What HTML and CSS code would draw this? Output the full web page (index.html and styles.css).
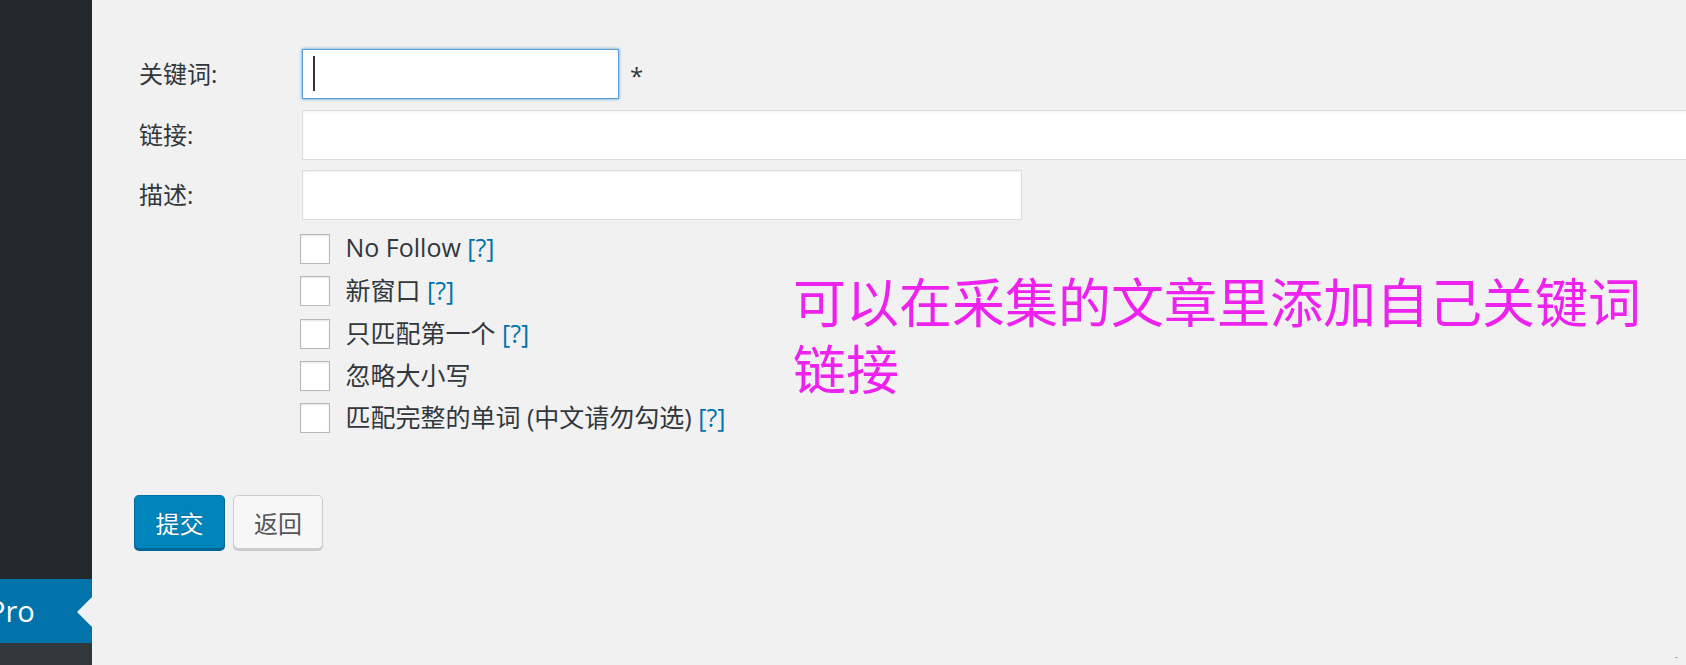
FILE: index.html
```html
<!DOCTYPE html>
<html lang="zh-CN">

<head>
    <meta charset="UTF-8">
    <meta name="viewport" content="width=device-width, initial-scale=1.0">
    <title>关键词链接</title>
    <link rel="stylesheet" href="styles.css">
</head>

<body>

    <!-- Admin menu -->
    <div class="sidebar">
        <div class="menu-top"></div>
        <div class="menu-item current">
            <span class="menu-name">Pro</span>
        </div>
        <div class="menu-sub"></div>
    </div>

    <div class="main">
        <form class="keyword-form">
            <div class="fields">
                <div class="form-row">
                    <label class="form-label" for="keyword">关键词:</label>
                    <div class="field">
                        <input type="text" id="keyword" class="text-input focused">
                        <span class="caret"></span>
                    </div>
                    <span class="required">*</span>
                </div>

                <div class="form-row">
                    <label class="form-label" for="link">链接:</label>
                    <input type="text" id="link" class="text-input wide">
                </div>

                <div class="form-row">
                    <label class="form-label" for="desc">描述:</label>
                    <input type="text" id="desc" class="text-input medium">
                </div>
            </div>

            <!-- Options -->
            <div class="options">
                <label class="option"><input type="checkbox"><span class="option-text"> No Follow <a href="#">[?]</a></span></label>
                <label class="option"><input type="checkbox"><span class="option-text"> 新窗口 <a href="#">[?]</a></span></label>
                <label class="option"><input type="checkbox"><span class="option-text"> 只匹配第一个 <a href="#">[?]</a></span></label>
                <label class="option"><input type="checkbox"><span class="option-text"> 忽略大小写</span></label>
                <label class="option"><input type="checkbox"><span class="option-text"> 匹配完整的单词 (中文请勿勾选) <a href="#">[?]</a></span></label>
            </div>

            <div class="actions">
                <button type="submit" class="btn btn-primary">提交</button>
                <button type="button" class="btn">返回</button>
            </div>
        </form>

        <div class="note">可以在采集的文章里添加自己关键词链接</div>
        <span class="corner-mark"></span>
    </div>

</body>

</html>
```

FILE: styles.css
```css
/* General Reset */
* {
    margin: 0;
    padding: 0;
    box-sizing: border-box;
}

html,
body {
    height: 100%;
    overflow: hidden;
}

body {
    font-family: 'Open Sans', 'Noto Sans CJK SC', sans-serif;
    background: #f1f1f1;
    color: #32373c;
    display: flex;
}

/* Sidebar */
.sidebar {
    width: 92px;
    flex-shrink: 0;
    display: flex;
    flex-direction: column;
    background: #23282d;
}

.menu-top {
    flex: 1;
}

.menu-item {
    height: 64px;
    display: flex;
    align-items: center;
    overflow: hidden;
    position: relative;
}

.menu-item.current {
    background: #0073aa;
}

.menu-item.current::after {
    content: '';
    position: absolute;
    right: 0;
    top: 33px;
    margin-top: -15px;
    border: 15px solid transparent;
    border-right-color: #f1f1f1;
}

.menu-name {
    color: #fff;
    font-size: 29px;
    line-height: 1;
    margin-left: -12px;
    margin-top: -2px;
    white-space: nowrap;
}

.menu-sub {
    height: 22px;
    background: #32373c;
}

/* Main area */
.main {
    flex: 1;
    position: relative;
    padding-left: 42px;
    overflow: hidden;
}

.keyword-form {
    margin-top: 49px;
}

.fields {
    display: flex;
    flex-direction: column;
    gap: 10.5px;
}

.form-row {
    display: flex;
    align-items: center;
    height: 50px;
    padding-left: 5px;
}

.form-label {
    width: 163px;
    flex-shrink: 0;
    font-size: 24px;
    line-height: 1;
    color: #32373c;
}

.field {
    position: relative;
}

.text-input {
    display: block;
    height: 50px;
    border: 1px solid #ddd;
    background: #fff;
    box-shadow: inset 0 1px 2px rgba(0, 0, 0, 0.07);
    font-size: 24px;
    outline: none;
}

.text-input.focused {
    width: 317px;
    border-color: #5b9dd9;
    box-shadow: 0 0 3px rgba(30, 140, 190, 0.8);
}

.text-input.wide {
    width: 1450px;
    flex-shrink: 0;
}

.text-input.medium {
    width: 720px;
}

.caret {
    position: absolute;
    left: 11px;
    top: 7px;
    width: 2px;
    height: 35px;
    background: #32373c;
}

.required {
    font-size: 24px;
    margin-left: 11px;
    margin-top: 2px;
    color: #32373c;
}

/* Checkbox options */
.options {
    margin-top: 8px;
    margin-left: 166px;
}

.option {
    display: flex;
    align-items: center;
    height: 42.25px;
    font-size: 25px;
    color: #32373c;
    white-space: pre;
}

.option input {
    appearance: none;
    width: 30px;
    height: 30px;
    margin-right: 9px;
    border: 1px solid #b4b9be;
    background: #fff;
    box-shadow: inset 0 1px 2px rgba(0, 0, 0, 0.1);
}

.option-text {
    margin-top: -4px;
}

.option a {
    color: #0073aa;
    text-decoration: none;
}

/* Buttons */
.actions {
    display: flex;
    gap: 8px;
    margin-top: 56px;
}

.btn {
    height: 54px;
    width: 90px;
    font-family: inherit;
    font-size: 24px;
    color: #555;
    background: #f7f7f7;
    border: 1px solid #ccc;
    border-radius: 5px;
    box-shadow: 0 2px 0 #ccc;
    cursor: pointer;
}

.btn-primary {
    width: 91px;
    color: #fff;
    background: #0085ba;
    border-color: #0073aa #006799 #006799;
    box-shadow: 0 2px 0 #006799;
    text-shadow: 0 -1px 1px #006799;
}

/* Annotation drawn over the page */
.note {
    position: absolute;
    left: 701px;
    top: 267px;
    width: 870px;
    font-family: 'Noto Sans CJK SC', sans-serif;
    font-size: 53px;
    line-height: 67px;
    color: #ee22ee;
}

.corner-mark {
    position: absolute;
    right: 8px;
    bottom: 7px;
    width: 3px;
    height: 1px;
    background: #aaa;
}
```
